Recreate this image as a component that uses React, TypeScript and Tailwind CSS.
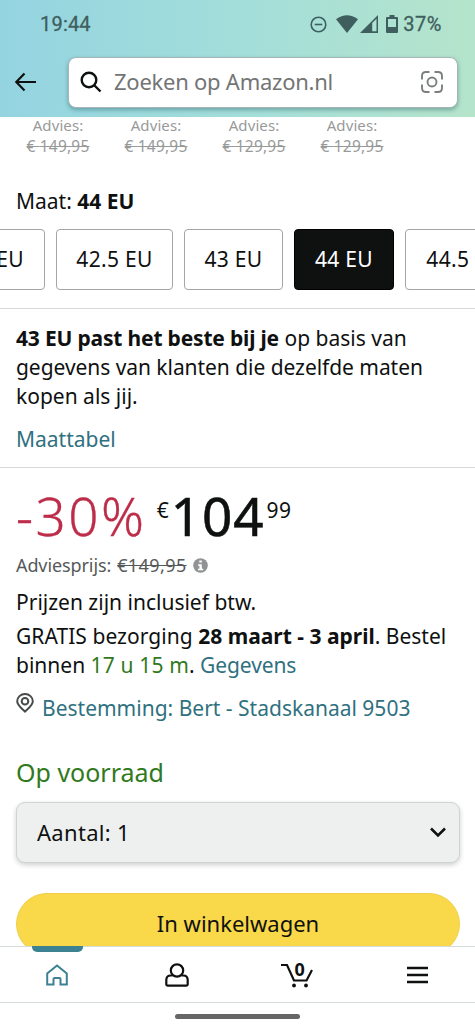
import React from 'react';

const advicePrices = ["149,95", "149,95", "129,95", "129,95"];

const sizes = [
  { label: "42 EU", width: "w-[100px]", selected: false },
  { label: "42.5 EU", width: "w-[117px]", selected: false },
  { label: "43 EU", width: "w-[99px]", selected: false },
  { label: "44 EU", width: "w-[100px]", selected: true },
  { label: "44.5 EU", width: "w-[119px]", selected: false },
];

const StatusBar = () => {
  return (
    <div className="flex h-[48px] items-center justify-between pl-10 pr-[33px] text-[#3f5f5e]">
      <span className="font-[Roboto] text-[20px] leading-none tracking-[0.2px] [-webkit-text-stroke:0.3px]">19:44</span>
      <div className="flex items-center">
        <svg width="17" height="17" viewBox="0 0 17 17" fill="none" stroke="currentColor" strokeWidth="1.6">
          <circle cx="8.5" cy="8.5" r="7.3" />
          <path d="M4.7 8.5h7.6" />
        </svg>
        <svg className="ml-[9px]" width="22" height="18" viewBox="0 0 22 18" fill="currentColor">
          <path d="M0 4.2Q11-3.8 22 4.2L11 18Z" />
        </svg>
        <svg className="ml-[2px]" width="18" height="18" viewBox="0 0 18 18">
          <path d="M0 18L18 0v18Z" fill="currentColor" />
          <path d="M12.2 8L16.5 3.7v12.6h-4.3Z" fill="#aee2d2" />
        </svg>
        <svg className="ml-[8px]" width="12" height="18" viewBox="0 0 12 18">
          <path d="M3.5 0h5v2H11q1 0 1 1v14q0 1-1 1H1q-1 0-1-1V3q0-1 1-1h2.500Z" fill="currentColor" />
          <path d="M2 4h8v8H2Z" fill="#aee2d2" />
        </svg>
        <span className="ml-[5px] font-[Roboto] text-[20px] leading-none tracking-[0.5px] [-webkit-text-stroke:0.3px]">37%</span>
      </div>
    </div>
  );
};

const Header = () => {
  return (
    <header className="h-[117px] shrink-0 bg-gradient-to-r from-[#94d4e1] via-[#a3deda] to-[#b5e4cb]">
      <StatusBar />
      <div className="flex items-center pl-[14px] pr-[17px] pt-[9px]">
        <svg className="-mt-[2px]" width="23" height="20" viewBox="0 0 23 20" fill="none" stroke="#0f1111" strokeWidth="2.200">
          <path d="M10.500 1.500L2.300 10l8.200 8.500M2.300 10H22" />
        </svg>
        <div className="ml-[31px] flex h-[51px] flex-1 items-center rounded-lg border border-[#a6b6b7] bg-white pb-[2px] pl-[11px] pr-[14px] shadow-[0_2px_4px_rgba(0,60,70,0.35)]">
          <svg width="22" height="22" viewBox="0 0 22 22" fill="none" stroke="#0f1111" strokeWidth="2.400">
            <circle cx="9" cy="9" r="7.300" />
            <path d="M14 14l6.500 6.500" />
          </svg>
          <span className="-mt-[2px] ml-[12px] flex-1 whitespace-nowrap text-[22px] leading-none tracking-[-0.25px] text-[#737575]">Zoeken op Amazon.nl</span>
          <svg width="22" height="22" viewBox="0 0 22 22" fill="none" stroke="#7b7f7f" strokeWidth="1.900">
            <path d="M1 8.500V5Q1 1 5 1h3.500M13.500 1H17Q21 1 21 5v3.500M21 13.500V17Q21 21 17 21h-3.500M8.500 21H5Q1 21 1 17v-3.500" />
            <circle cx="11" cy="11" r="4.500" />
          </svg>
        </div>
      </div>
    </header>
  );
};

const SizePicker = () => {
  return (
    <section className="border-b border-[#d5d9d9] pb-[18px]">
      <div className="-mt-[2px] flex pl-[9px] text-center leading-[21px] text-[#989a9a]">
        {advicePrices.map((price, index) => (
          <div key={index} className="w-[98px]">
            <div className="text-[15px] tracking-[0.1px]">Advies:</div>
            <div className="text-[15.5px] tracking-[0.2px] line-through">€ {price}</div>
          </div>
        ))}
      </div>
      <div className="mt-[29px] px-4 leading-[30px]">
        Maat: <b>44 EU</b>
      </div>
      <div className="-ml-[55px] mt-[13px] flex gap-[11px]">
        {sizes.map((size) => (
          <button
            key={size.label}
            className={`h-[61px] shrink-0 rounded-[4px] border tracking-[0.3px] ${size.width} ${size.selected ? 'border-black bg-[#0f1111] text-white' : 'border-[#a2a6a6] bg-white'}`}
          >
            {size.label}
          </button>
        ))}
      </div>
    </section>
  );
};

const FitAdvice = () => {
  return (
    <section className="border-b border-[#d5d9d9] px-4 pb-[13px] pt-[15px] leading-[29px]">
      <p className="whitespace-nowrap">
        <b className="tracking-[-0.18px]">43 EU past het beste bij je</b> op basis van<br />
        <span className="tracking-[-0.05px]">gegevens van klanten die dezelfde maten</span><br />
        kopen als jij.
      </p>
      <p className="mt-[14px] text-[#2f7180]">Maattabel</p>
    </section>
  );
};

const Price = () => {
  return (
    <div className="flex h-[76px] items-start whitespace-nowrap pt-[11px]">
      <span className="text-[53px] font-light leading-[73px] tracking-[2.5px] text-[#bd2c48] [-webkit-text-stroke:0.3px]">-30%</span>
      <span className="ml-[10px] mt-[16px] text-[21px] leading-[30px]">€</span>
      <span className="ml-[2px] text-[53px] leading-[73px] tracking-[1px] [-webkit-text-stroke:0.6px]">104</span>
      <span className="ml-[2px] mt-[16px] text-[21px] leading-[30px] tracking-[0.5px]">99</span>
    </div>
  );
};

const BuyBox = () => {
  return (
    <section className="px-4">
      <Price />
      <div className="mt-[7px] flex items-center text-[18px] leading-[28px] text-[#565959]">
        <span className="tracking-[-0.1px]">Adviesprijs:</span>
        <span className="ml-[6px] tracking-[0.4px] line-through">€149,95</span>
        <svg className="ml-[6px]" width="15" height="15" viewBox="0 0 15 15">
          <circle cx="7.500" cy="7.500" r="7.300" fill="#919494" />
          <path d="M6.300 2.500h2.500v2H6.300ZM5 6.300h3.800v4.500h1.400v1.500H5v-1.500h1.400V7.800H5Z" fill="#fff" />
        </svg>
      </div>
      <p className="mt-[9px] leading-[29px]">Prijzen zijn inclusief btw.</p>
      <p className="mt-[5px] whitespace-nowrap leading-[29px]">
        <span className="tracking-[0.05px]">GRATIS bezorging</span> <b>28 maart - 3 april</b>. Bestel<br />
        binnen <span className="tracking-[0.15px] text-[#31791d]">17 u 15 m</span>. <span className="tracking-[-0.1px] text-[#2f7180]">Gegevens</span>
      </p>
      <div className="mt-[14px] flex leading-[29px] text-[#2f7180]">
        <svg className="-mt-[1px]" width="18" height="20" viewBox="0 0 18 20" fill="none" stroke="#484a4a" strokeWidth="2">
          <path d="M9 18.500C6 15.500 1.200 12.500 1.200 8.300a7.800 7.300 0 0 1 15.600 0C16.800 12.500 12 15.500 9 18.500Z" />
          <circle cx="9" cy="8.300" r="3.300" />
        </svg>
        <span className="ml-[8px] whitespace-nowrap">Bestemming: Bert - Stadskanaal 9503</span>
      </div>
      <p className="mt-[32px] text-[25px] leading-[34px] text-[#31791d]">Op voorraad</p>
      <button className="mt-[13px] flex h-[61px] w-[444px] items-center justify-between rounded-[9px] border border-[#cfd3d3] bg-[#eef0f0] pl-5 pr-[13px] shadow-[0_2px_5px_rgba(15,17,17,0.2)]">
        <span className="text-[22px] tracking-[0.3px]">Aantal: 1</span>
        <svg width="16" height="11" viewBox="0 0 16 11" fill="none" stroke="#0f1111" strokeWidth="2.500">
          <path d="M1 1.500L8 8.500l7-7" />
        </svg>
      </button>
      <button className="mt-[30px] h-[62px] w-[444px] rounded-full border border-[#f0d04a] bg-[#f9d849] pb-[2px] text-[22px]">In winkelwagen</button>
    </section>
  );
};

const BottomNav = () => {
  return (
    <nav className="relative grid h-[57px] shrink-0 grid-cols-4 items-center border-y border-[#d5dbdb] bg-white">
      <div className="relative flex h-full w-[114px] items-center justify-center">
        <span className="absolute left-[32px] top-[-1px] h-[6px] w-[51px] rounded-b-[5px] bg-[#3c8292]" />
        <svg width="22" height="22" viewBox="0 0 22 22" fill="none" stroke="#3c8292" strokeWidth="2">
          <path d="M1.200 20.500V9.500L11 1.500 20.800 9.500v11h-6.300v-5.500q0-1-1-1h-5q-1 0-1 1v5.500Z" />
        </svg>
      </div>
      <div className="flex justify-center pr-[2px]">
        <svg width="24" height="24" viewBox="0 0 24 24" fill="none" stroke="#0f1111" strokeWidth="2.200">
          <circle cx="12" cy="7.500" r="6.200" />
          <path d="M7.500 12.500H5.700Q1.300 12.500 1.300 17v4q0 1.700 1.700 1.700h18q1.700 0 1.700-1.700v-4q0-4.500-4.400-4.500h-1.800" />
        </svg>
      </div>
      <div className="relative flex justify-center">
        <svg width="32" height="26" viewBox="0 0 32 26" fill="none" stroke="#0f1111" strokeWidth="2.200">
          <path d="M0 3h6l7 15.500h12.500L31 8" />
          <circle cx="13" cy="23.500" r="1.900" fill="#0f1111" stroke="none" />
          <circle cx="25" cy="23.500" r="1.900" fill="#0f1111" stroke="none" />
        </svg>
        <span className="absolute left-[57px] top-[-5px] text-[18px] font-bold leading-[24px]">0</span>
      </div>
      <div className="flex justify-center pl-[3px]">
        <svg width="21" height="18" viewBox="0 0 21 18" stroke="#0f1111" strokeWidth="2.400">
          <path d="M0 2h21M0 9h21M0 16h21" />
        </svg>
      </div>
    </nav>
  );
};

const App = () => {
  return (
    <div className="flex h-[1029px] w-[475px] flex-col overflow-hidden bg-white font-['Noto_Sans',sans-serif] text-[21px] text-[#0f1111]">
      <Header />
      <main className="min-h-0 flex-1">
        <SizePicker />
        <FitAdvice />
        <BuyBox />
      </main>
      <BottomNav />
      <div className="relative flex h-[26px] shrink-0 items-center justify-center bg-white">
        <span className="h-[5px] w-[125px] rounded-full bg-[#666]" />
      </div>
    </div>
  );
};

export default App;
